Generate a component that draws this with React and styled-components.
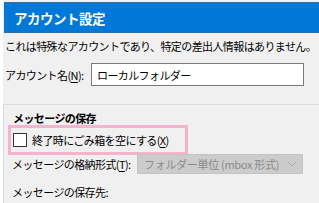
import React from "react";
import styled, { createGlobalStyle } from "styled-components";

const GlobalStyle = createGlobalStyle`
  html, body {
    margin: 0;
    padding: 0;
    background: #f0f0f0;
    overflow: hidden;
  }
  body {
    font-family: "Noto Sans CJK JP", "Noto Sans", sans-serif;
    color: #000;
  }
`;

const Page = styled.div`
  width: 319px;
  height: 203px;
  box-sizing: border-box;
  border-left: 3px solid #ffffff;
  background: #f0f0f0;
  padding-top: 2px;
  overflow: hidden;
`;

const Header = styled.div`
  margin-left: 1px;
  height: 31px;
  box-sizing: border-box;
  background: #0078d7;
  border-top: 1px solid #3a6f9c;
  border-bottom: 1px solid #2c6da3;
  display: flex;
  align-items: center;
  padding-left: 10px;
  color: #fff;
  font-size: 13.5px;
  font-weight: bold;
  letter-spacing: -0.5px;
`;

const Content = styled.div`
  padding-left: 2px;
  font-size: 11px;
  letter-spacing: -0.6px;
`;

const Line = styled.div`
  height: 16px;
  line-height: 16px;
  margin-top: ${(p) => p.$top || 0}px;
  white-space: nowrap;
`;

const Row = styled.div`
  display: flex;
  align-items: center;
  margin-top: ${(p) => p.$top || 0}px;
  white-space: nowrap;
`;

const Label = styled.span`
  width: ${(p) => p.$w}px;
  flex-shrink: 0;
`;

const Key = styled.span`
  text-decoration: underline;
  text-underline-offset: 2px;
`;

const TextBox = styled.div`
  width: 213px;
  height: 23px;
  box-sizing: border-box;
  background: #fff;
  border: 1px solid #7a7a7a;
  display: flex;
  align-items: center;
  padding-left: 5px;
`;

const Group = styled.div`
  margin-top: 18px;
  margin-left: -2px;
  border-top: 1px solid #dadada;
  border-left: 1px solid #dadada;
  padding: 5px 0 0 8px;
  height: 120px;
`;

const GroupTitle = styled.div`
  font-weight: bold;
  height: 16px;
  line-height: 16px;
  margin-left: 1px;
`;

const Highlight = styled.div`
  margin-left: -4px;
  margin-top: -1px;
  width: 180px;
  height: 30px;
  box-sizing: border-box;
  border: 3px solid #f4b4ce;
  display: flex;
  align-items: center;
  padding-left: 2px;
  gap: 5px;
`;

const Check = styled.span`
  width: 14px;
  height: 14px;
  box-sizing: border-box;
  border: 1px solid #333;
  background: #fff;
  flex-shrink: 0;
`;

const Select = styled.div`
  width: 166px;
  height: 20px;
  box-sizing: border-box;
  background: #cccccc;
  border: 1px solid #c4c4c4;
  color: #8a8a8a;
  display: flex;
  align-items: center;
  justify-content: space-between;
  padding: 0 5px 0 6px;
  letter-spacing: -0.3px;
  font-size: 11px;

  svg {
    flex-shrink: 0;
  }
`;

export default function App() {
  return (
    <>
      <GlobalStyle />
      <Page>
        <Header>アカウント設定</Header>
        <Content>
          <Line $top={5}>これは特殊なアカウントであり、特定の差出人情報はありません。</Line>
          <Row $top={9}>
            <Label $w={86}>
              アカウント名(<Key>N</Key>):
            </Label>
            <TextBox>ローカルフォルダー</TextBox>
          </Row>
          <Group>
            <GroupTitle>メッセージの保存</GroupTitle>
            <Highlight>
              <Check />
              <span>
                終了時にごみ箱を空にする(<Key>X</Key>)
              </span>
            </Highlight>
            <Row $top={-1}>
              <Label $w={125}>
                メッセージの格納形式(<Key>T</Key>):
              </Label>
              <Select>
                <span>フォルダー単位 (mbox 形式)</span>
                <svg width="10" height="6" viewBox="0 0 10 6">
                  <path d="M0.5 0.5 L5 5 L9.5 0.5" fill="none" stroke="#a8a8a8" strokeWidth="1" />
                </svg>
              </Select>
            </Row>
            <Line $top={10}>メッセージの保存先:</Line>
          </Group>
        </Content>
      </Page>
    </>
  );
}
